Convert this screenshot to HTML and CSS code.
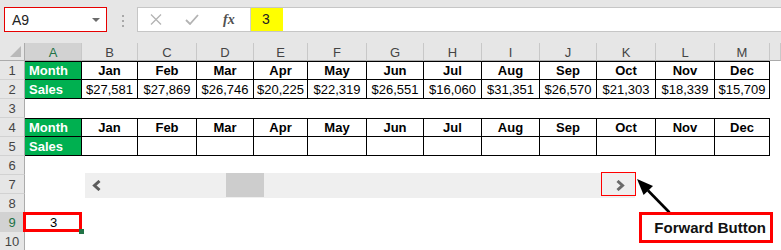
FILE: index.html
```html
<!DOCTYPE html>
<html lang="en">
<head>
    <meta charset="UTF-8">
    <title>Scroll Bar - Forward Button</title>
    <link rel="stylesheet" href="styles.css">
</head>
<body>
<div class="screen">
    <div class="toolbar">
        <div class="name-box">A9<span class="dd"></span></div>
        <div class="grip"><i></i><i></i><i></i></div>
        <div class="formula-bar">
            <div class="fx-tools">
                <svg class="ico-x" width="12" height="11" viewBox="0 0 12 11"><path d="M1 0.5 L11 10.5 M11 0.5 L1 10.5" stroke="#b3b3b3" stroke-width="1.3" fill="none"/></svg>
                <svg class="ico-ok" width="14" height="11" viewBox="0 0 14 11"><path d="M1 6 L5 10 L13 1" stroke="#b3b3b3" stroke-width="1.8" fill="none"/></svg>
                <span class="fx">fx</span>
            </div>
            <div class="value">3</div>
        </div>
    </div>

    <div class="sheet">
        <div class="corner"><span></span></div>
        <div class="ch sel">A</div>
        <div class="ch">B</div>
        <div class="ch">C</div>
        <div class="ch">D</div>
        <div class="ch">E</div>
        <div class="ch">F</div>
        <div class="ch">G</div>
        <div class="ch">H</div>
        <div class="ch">I</div>
        <div class="ch">J</div>
        <div class="ch">K</div>
        <div class="ch">L</div>
        <div class="ch">M</div>
        <div class="ch"></div>

        <div class="rh">1</div>
        <div class="c t g">Month</div>
        <div class="c t b">Jan</div>
        <div class="c t b">Feb</div>
        <div class="c t b">Mar</div>
        <div class="c t b">Apr</div>
        <div class="c t b">May</div>
        <div class="c t b">Jun</div>
        <div class="c t b">Jul</div>
        <div class="c t b">Aug</div>
        <div class="c t b">Sep</div>
        <div class="c t b">Oct</div>
        <div class="c t b">Nov</div>
        <div class="c t b">Dec</div>

        <div class="rh">2</div>
        <div class="c g">Sales</div>
        <div class="c">$27,581</div>
        <div class="c">$27,869</div>
        <div class="c">$26,746</div>
        <div class="c">$20,225</div>
        <div class="c">$22,319</div>
        <div class="c">$26,551</div>
        <div class="c">$16,060</div>
        <div class="c">$31,351</div>
        <div class="c">$26,570</div>
        <div class="c">$21,303</div>
        <div class="c">$18,339</div>
        <div class="c">$15,709</div>

        <div class="rh">3</div>
        <div class="blank"></div>

        <div class="rh">4</div>
        <div class="c t g">Month</div>
        <div class="c t b">Jan</div>
        <div class="c t b">Feb</div>
        <div class="c t b">Mar</div>
        <div class="c t b">Apr</div>
        <div class="c t b">May</div>
        <div class="c t b">Jun</div>
        <div class="c t b">Jul</div>
        <div class="c t b">Aug</div>
        <div class="c t b">Sep</div>
        <div class="c t b">Oct</div>
        <div class="c t b">Nov</div>
        <div class="c t b">Dec</div>

        <div class="rh">5</div>
        <div class="c g">Sales</div>
        <div class="c"></div>
        <div class="c"></div>
        <div class="c"></div>
        <div class="c"></div>
        <div class="c"></div>
        <div class="c"></div>
        <div class="c"></div>
        <div class="c"></div>
        <div class="c"></div>
        <div class="c"></div>
        <div class="c"></div>
        <div class="c"></div>

        <div class="rh">6</div>
        <div class="blank"></div>
        <div class="rh">7</div>
        <div class="blank"></div>
        <div class="rh">8</div>
        <div class="blank"></div>

        <div class="rh sel">9</div>
        <div class="active">3</div>
        <div class="rest"></div>

        <div class="rh">10</div>
        <div class="blank"></div>
    </div>

    <!-- scroll bar form control sitting on the sheet -->
    <div class="scrollbar">
        <div class="sb-prev">
            <svg width="10" height="11" viewBox="0 0 10 11"><path d="M7.5 1 L2.5 5.5 L7.5 10" stroke="#5c5c5c" stroke-width="3" fill="none"/></svg>
        </div>
        <div class="sb-thumb"></div>
        <div class="sb-track"></div>
        <div class="sb-next">
            <svg width="10" height="11" viewBox="0 0 10 11"><path d="M2.5 1 L7.5 5.5 L2.5 10" stroke="#6a6a6a" stroke-width="3" fill="none"/></svg>
        </div>
    </div>

    <div class="mark"></div>
    <svg class="pointer" width="45" height="45" viewBox="0 0 45 45">
        <line x1="18" y1="18.5" x2="39.5" y2="40.5" stroke="#000" stroke-width="2.6"/>
        <polygon points="7,7 13.6,23 23,14" fill="#000"/>
    </svg>
    <div class="callout">Forward Button</div>
</div>
</body>
</html>
```

FILE: styles.css
```css
* {
    box-sizing: border-box;
}

body {
    margin: 0;
    background: #ffffff;
    font-family: "Liberation Sans", Arial, sans-serif;
    font-size: 13px;
    color: #000;
    overflow: hidden;
}

.screen {
    position: relative;
    width: 781px;
    height: 250px;
    overflow: hidden;
}

/* ---------- formula toolbar ---------- */

.toolbar {
    height: 43px;
    background: #e6e6e6;
    display: flex;
    align-items: flex-start;
    padding-top: 7px;
}

.name-box {
    margin-left: 4px;
    width: 103px;
    height: 25px;
    border: 1px solid #e60000;
    background: #fff;
    display: flex;
    align-items: center;
    padding-left: 7px;
    font-size: 14px;
    color: #222;
}

.dd {
    margin-left: auto;
    margin-right: 6px;
    border-left: 4px solid transparent;
    border-right: 4px solid transparent;
    border-top: 4px solid #6b6b6b;
}

.grip {
    display: flex;
    flex-direction: column;
    gap: 3px;
    margin: 8px 13px 0 15px;
}

.grip i {
    display: block;
    width: 2px;
    height: 2px;
    background: #a8a8a8;
}

.formula-bar {
    flex: 1;
    height: 25px;
    margin-right: -2px;
    border: 1px solid #c6c6c6;
    background: #fff;
    display: flex;
}

.fx-tools {
    width: 113px;
    display: flex;
    align-items: center;
    padding-left: 12px;
    border-right: 1px solid #d0d0d0;
}

.ico-ok {
    margin-left: 23px;
}

.fx {
    margin-left: 24px;
    font-family: "Liberation Serif", "Times New Roman", serif;
    font-style: italic;
    font-weight: bold;
    font-size: 14px;
    color: #505050;
}

.value {
    width: 32px;
    background: #ffff00;
    padding-left: 11px;
    line-height: 23px;
    font-size: 14px;
    color: #222;
}

/* ---------- worksheet grid ---------- */

.sheet {
    display: grid;
    grid-template-columns: 25px 57px 56px 59px 57px 54px 59px 57px 58px 58px 57px 59px 59px 55px 1fr;
    grid-template-rows: 18px repeat(10, 19px);
}

.corner {
    background: #e6e6e6;
    border-right: 1px solid #ababab;
    border-bottom: 1px solid #ababab;
    display: flex;
    justify-content: flex-end;
    align-items: flex-end;
    padding: 0 3px 3px 0;
}

.corner span {
    border-left: 11px solid transparent;
    border-bottom: 11px solid #b9b9b9;
}

.ch {
    background: #e6e6e6;
    color: #444;
    text-align: center;
    padding-top: 2px;
    line-height: 16px;
    border-right: 1px solid #c8c8c8;
    border-bottom: 1px solid #ababab;
}

.rh {
    grid-column: 1;
    background: #e6e6e6;
    color: #444;
    text-align: center;
    padding-top: 2px;
    line-height: 16px;
    border-right: 1px solid #ababab;
    border-bottom: 1px solid #d2d2d2;
}

.ch.sel,
.rh.sel {
    background: #d2d2d2;
    color: #217346;
}

.c {
    text-align: center;
    white-space: nowrap;
    overflow: hidden;
    padding-top: 2px;
    line-height: 16px;
    border-right: 1px solid #000;
    border-bottom: 1px solid #000;
}

.c.t {
    border-top: 1px solid #000;
    padding-top: 1px;
}

.c.b {
    font-weight: bold;
}

.c.g {
    background: #00b050;
    color: #fff;
    font-weight: bold;
    text-align: left;
    padding-left: 4px;
}

.blank {
    grid-column: 2 / -1;
}

.rest {
    grid-column: 3 / -1;
}

.active {
    position: relative;
    text-align: center;
    padding-top: 2px;
    line-height: 16px;
}

.active::after {
    content: "";
    position: absolute;
    left: -2px;
    top: -1px;
    right: 0;
    bottom: 0;
    border: 3px solid #ff0000;
}

.active::before {
    content: "";
    position: absolute;
    right: -2px;
    bottom: -2px;
    width: 5px;
    height: 5px;
    background: #217346;
    z-index: 1;
}

/* ---------- scroll bar control + annotation ---------- */

.scrollbar {
    position: absolute;
    left: 85px;
    top: 173px;
    width: 550px;
    height: 25px;
    background: #efefef;
    display: flex;
}

.sb-prev {
    width: 24px;
    display: flex;
    align-items: center;
    justify-content: center;
}

.sb-thumb {
    margin-left: 117px;
    width: 38px;
    height: 24px;
    background: #cdcdcd;
}

.sb-track {
    flex: 1;
}

.sb-next {
    width: 30px;
    display: flex;
    align-items: center;
    justify-content: center;
    padding-right: 1px;
}

.mark {
    position: absolute;
    left: 601px;
    top: 172px;
    width: 35px;
    height: 24px;
    border: 1px solid #ff0000;
}

.pointer {
    position: absolute;
    left: 630px;
    top: 172px;
}

.callout {
    position: absolute;
    left: 639px;
    top: 212px;
    width: 134px;
    height: 31px;
    border: 3px solid #ff0000;
    background: #fff;
    display: flex;
    align-items: center;
    justify-content: flex-end;
    padding-right: 4px;
    font-weight: bold;
    font-size: 15px;
    color: #111;
}
```
